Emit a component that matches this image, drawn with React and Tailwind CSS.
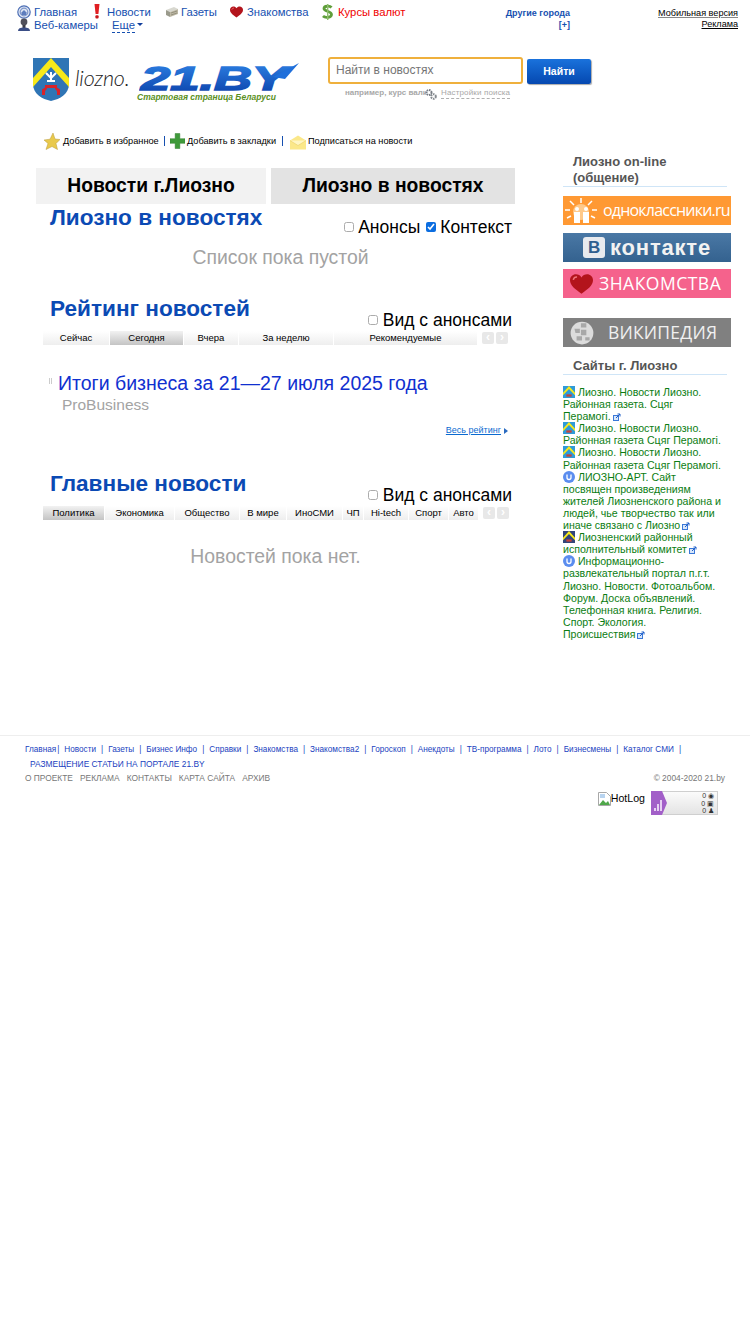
import React from "react";

const Shield = ({ className = "w-[36px] h-[43px]" }) => (
  <svg viewBox="0 0 36 43" className={className}>
    <path d="M0 0H36V26C36 36 27 41 18 43C9 41 0 36 0 26Z" fill="#2f75b5" />
    <path d="M0 20L18 0L36 20V29L18 9L0 29Z" fill="#f7e91a" />
    <path d="M18 14v10M13 15l5 5 5-5M14 23h8" stroke="#fff" strokeWidth="2" fill="none" />
    <path d="M9 37v-5c0-2 3-1 3-3v-2h12v2c0 2 3 1 3 3v5h-3v-3c0-2-2-2-2-4h-8c0 2-2 2-2 4v3z" fill="#d8232a" />
  </svg>
);

const IconHome = () => (
  <svg viewBox="0 0 14 14" className="w-[14px] h-[14px]">
    <circle cx="7" cy="7" r="6.2" fill="#dfe7f5" stroke="#4d6fb5" strokeWidth="1.2" />
    <circle cx="7" cy="7" r="3.8" fill="none" stroke="#7f96c8" strokeWidth="1.2" />
    <path d="M4.5 7.5L7 5l2.5 2.5V10h-5z" fill="#5d7dbd" />
  </svg>
);
const IconAlert = () => (
  <svg viewBox="0 0 10 15" className="w-[10px] h-[15px]">
    <path d="M2.5 0h5L6.4 10H3.6z" fill="#e01e22" />
    <rect x="3.4" y="11.2" width="3.2" height="3.4" rx="1" fill="#c8161a" />
  </svg>
);
const IconPapers = () => (
  <svg viewBox="0 0 14 12" className="w-[14px] h-[12px]">
    <path d="M1 4l8-3 4 2-8 3z" fill="#d8d8d0" />
    <path d="M1 4l4 2v5L1 9z" fill="#9a9a8c" />
    <path d="M5 6l8-3v5l-8 3z" fill="#bdb8a4" />
    <path d="M6 7l6-2M6 9l6-2" stroke="#837f6e" strokeWidth=".7" />
  </svg>
);
const IconHeart = ({ className = "w-[13px] h-[12px]" }) => (
  <svg viewBox="0 0 14 12" className={className}>
    <path d="M7 12C3 9 0 7 0 3.600C0 1.500 1.700 0 3.600 0C5 0 6.300.7 7 2C7.700.7 9 0 10.400 0C12.300 0 14 1.500 14 3.600C14 7 11 9 7 12Z" fill="#b3141c" />
    <path d="M2 3.500C2.300 2.300 3.300 1.700 4.300 1.800" stroke="#f0747a" strokeWidth=".9" fill="none" />
  </svg>
);
const IconDollar = () => (
  <svg viewBox="0 0 13 16" className="w-[13px] h-[16px]">
    <path d="M10.500 3.500C9 1.800 3 1.500 3 4.500C3 7.500 10.500 7 10.500 10.500C10.500 13.800 4 14 2 12" stroke="#5f9e3a" strokeWidth="2.800" fill="none" />
    <path d="M6.700 0v16" stroke="#8fbf6e" strokeWidth="1.400" />
  </svg>
);
const IconCam = () => (
  <svg viewBox="0 0 14 14" className="w-[14px] h-[14px]">
    <circle cx="7" cy="4" r="3.400" fill="#50505a" />
    <path d="M5.500 7h3v3h-3z" fill="#3c3c46" />
    <path d="M1 13c0-2.500 2-3.500 6-3.500s6 1 6 3.500z" fill="#3b4e86" />
  </svg>
);
const NavItem = ({ w, icon, text, c = "text-[#1650b0]", gap = "w-[17px]" }) => (
  <div className={`${w} flex items-center shrink-0`}>
    <span className={`${gap} flex shrink-0 items-center`}>{icon}</span>
    <span className={`${c} text-[11.3px] leading-[14px] whitespace-nowrap`}>{text}</span>
  </div>
);

const Check = ({ checked, className = "" }) => (
  <input type="checkbox" defaultChecked={checked} readOnly className={`w-[10px] h-[10px] m-0 accent-[#0b6de0] ${checked ? "" : "opacity-60"} ${className}`} />
);

const SectionHead = ({ title, children }) => (
  <div className="h-[35px] flex justify-between pr-[3px]">
    <h2 className="pl-[14px] text-[22.6px] leading-[26px] font-bold text-[#0b4ab4]">{title}</h2>
    <div className="self-end flex items-center text-[17.5px] leading-[20px] text-black mb-[1px]">{children}</div>
  </div>
);

const Arrows = () => (
  <div className="flex ml-[5px] gap-[2px] mt-[1px]">
    {["‹", "›"].map((a) => (
      <span key={a} className="w-[12px] h-[12px] rounded-[2px] bg-[#e8e8e8] text-white text-[12px] leading-[11px] font-bold text-center">{a}</span>
    ))}
  </div>
);

const TabBar = ({ items }) => (
  <div className="flex ml-[7px] h-[14px] items-start">
    <div className="flex gap-[1px]">
      {items.map(([t, w, active]) => (
        <div
          key={t}
          className={`${w} h-[14px] text-center text-[9.5px] leading-[14px] text-black whitespace-nowrap bg-gradient-to-b ${active ? "from-[#f2f2f2] to-[#c4c4c4]" : "from-[#ffffff] to-[#eeeeee]"}`}
        >
          {t}
        </div>
      ))}
    </div>
    <Arrows />
  </div>
);

const Ext = () => (
  <svg viewBox="0 0 8 8" className="inline-block w-[8px] h-[8px] ml-[2px] align-[-1px]">
    <rect x=".5" y="2.500" width="5" height="5" fill="#d8e6fa" stroke="#3a78d8" />
    <path d="M3 5l4-4M4.500 1H7v2.500" stroke="#1f5fc8" fill="none" />
  </svg>
);
const Last = ({ children }) => (
  <span className="whitespace-nowrap">{children}<Ext /></span>
);
const Dot = () => (
  <svg viewBox="0 0 12 12" className="inline-block w-[12px] h-[12px] mr-[3px] align-[-2px]">
    <circle cx="6" cy="6" r="6" fill="#5b8def" />
    <path d="M4 3.500v3a2 2 0 0 0 4 0v-3" stroke="#fff" strokeWidth="1.300" fill="none" />
  </svg>
);
const Mini = ({ dark }) => (
  <span className="inline-block w-[12px] h-[12px] mr-[3px] align-[-2px] overflow-hidden">
    <svg viewBox="0 0 36 43" className="w-[12px] h-[12px]" preserveAspectRatio="none">
      <path d="M0 0H36V43H0Z" fill={dark ? "#33457a" : "#2f9bd8"} />
      <path d="M0 24L18 0L36 24V33L18 11L0 33Z" fill="#f7e91a" />
      <path d="M10 38v-8h16v8z" fill="#c8423a" />
    </svg>
  </span>
);

const footerLinks = ["Главная", "Новости", "Газеты", "Бизнес Инфо", "Справки", "Знакомства", "Знакомства2", "Гороскоп", "Анекдоты", "ТВ-программа", "Лото", "Бизнесмены", "Каталог СМИ"];

export default function App() {
  return (
    <div className="w-[750px] min-h-[1333px] bg-white font-['Liberation_Sans',Arial,sans-serif] text-black overflow-hidden">
      {/* top */}
      <header className="h-[57px] flex relative">
        <div className="w-[470px] pl-[17px] pt-[4px] shrink-0">
          <div className="flex h-[15px]">
            <NavItem w="w-[75px]" icon={<IconHome />} text="Главная" />
            <NavItem w="w-[73px]" icon={<IconAlert />} text="Новости" gap="w-[15px]" />
            <NavItem w="w-[65px]" icon={<IconPapers />} text="Газеты" gap="w-[16px]" />
            <NavItem w="w-[91px]" icon={<IconHeart />} text="Знакомства" />
            <NavItem w="w-[90px]" icon={<IconDollar />} text="Курсы валют" c="text-[#f00000]" />
          </div>
          <div className="flex h-[14px] mt-[-1px]">
            <NavItem w="w-[95px]" icon={<IconCam />} text="Веб-камеры" />
            <span className="text-[11.3px] leading-[14px] text-[#1650b0] border-b border-dashed border-[#1650b0] h-[15px]">Еще</span>
            <span className="ml-[2px] mt-[5px] w-0 h-0 border-x-[3px] border-x-transparent border-t-[3px] border-t-[#123f9c]" />
          </div>
        </div>
        <div className="w-[100px] pt-[8px] text-right text-[9px] leading-[11px] font-bold text-[#1650b0]">
          <div>Другие города</div>
          <div className="mt-[1px]">[+]</div>
        </div>
        <div className="flex-1 pr-[12px] pt-[8px] text-right text-[9.1px] leading-[11px] text-black">
          <div><span className="underline decoration-[#888]">Мобильная версия</span></div>
          <div><span className="underline">Реклама</span></div>
        </div>
      </header>

      {/* logos + search */}
      <section className="h-[76px] flex">
        <div className="w-[328px] shrink-0 flex pl-[33px]">
          <div className="pt-[1px]"><Shield /></div>
          <div className="w-[71px] pl-[6px] pt-[8px] font-['Lato',sans-serif] italic font-light text-[21.5px] leading-[26px] text-[#222] tracking-[-0.2px] whitespace-nowrap">liozno.</div>
          <div className="w-[160px]">
            <svg viewBox="0 0 162 30" className="w-[162px] h-[30px] -ml-[1px] mt-[5px]">
              <defs>
                <linearGradient id="lg" x1="0" y1="0" x2="0" y2="1">
                  <stop offset="0" stopColor="#2f86e8" />
                  <stop offset="1" stopColor="#0a3fa8" />
                </linearGradient>
              </defs>
              <text x="2" y="28" fontFamily="Liberation Sans" fontWeight="700" fontStyle="italic" fontSize="34" textLength="146" lengthAdjust="spacingAndGlyphs" fill="url(#lg)" stroke="url(#lg)" strokeWidth="1.5">21.BY</text>
              <path d="M134 15L160 1L146 17Z" fill="#1f6fdb" />
            </svg>
            <div className="-ml-[3px] mt-[0px] text-[8.5px] leading-[11px] font-bold italic text-[#5a8f22] whitespace-nowrap">Стартовая страница Беларуси</div>
          </div>
        </div>
        <div className="flex-1">
          <div className="flex">
            <div className="w-[195px] h-[27px] border-2 border-[#efb03c] rounded-[3px] pl-[6px] text-[12px] leading-[22px] text-[#757575]">Найти в новостях</div>
            <button className="ml-[4px] mt-[2px] w-[64px] h-[25px] rounded-[2px] bg-gradient-to-b from-[#1a72dc] to-[#0648b0] text-white text-[10.5px] font-bold shadow-[1px_1px_1px_#aaa]">Найти</button>
          </div>
          <div className="flex items-center pl-[17px] mt-[2px] text-[8px] leading-[12px] font-bold text-[#a8a8a8] whitespace-nowrap">
            <span className="w-[80px]">например, курс валк</span>
            <svg viewBox="0 0 12 12" className="w-[12px] h-[12px] mt-[2px]">
              <circle cx="4" cy="4.500" r="2.500" fill="none" stroke="#777c84" strokeWidth="2" strokeDasharray="1.500 .8" />
              <circle cx="8.500" cy="8.500" r="2.300" fill="none" stroke="#858a90" strokeWidth="2" strokeDasharray="1.500 .8" />
            </svg>
            <span className="ml-[4px] border-b border-dashed border-[#b0b0b0] font-normal tracking-[0.15px] leading-[10px]">Настройки поиска</span>
          </div>
        </div>
      </section>

      {/* body */}
      <div className="h-[602px] flex">
        <main className="w-[479px] ml-[36px] shrink-0">
          <div className="h-[35px] flex items-start text-[9.2px] leading-[16px] text-black whitespace-nowrap pl-[8px]">
            <svg viewBox="0 0 16 17" className="w-[16px] h-[17px] shrink-0"><path d="M9 0l2 6 5 .5-4 4 1.500 6-5.500-3-6 3 2-6L0 7l6-.8z" fill="#e9c94c" stroke="#b99a38" strokeWidth=".5" /></svg>
            <span className="ml-[3px] w-[95px]">Добавить в избранное</span>
            <span className="ml-[6px] w-[1px] h-[10px] mt-[3px] bg-[#1650b0]" />
            <svg viewBox="0 0 16 16" className="ml-[5px] w-[15px] h-[16px] shrink-0"><path d="M5.500 0h5v5.500H16v5h-5.500V16h-5v-5.500H0v-5h5.500z" fill="#3f9a3a" stroke="#2c7a2a" strokeWidth=".5" /></svg>
            <span className="ml-[2px] w-[88px]">Добавить в закладки</span>
            <span className="ml-[7px] w-[1px] h-[10px] mt-[3px] bg-[#1650b0]" />
            <svg viewBox="0 0 16 14" className="ml-[7px] w-[16px] h-[15px] mt-[2px] shrink-0"><path d="M0 5l8-5 8 5v9H0z" fill="#fbe88a" /><path d="M0 5l8 5 8-5" fill="#fff6c4" stroke="#e9cf68" strokeWidth=".6" /></svg>
            <span className="ml-[2px]">Подписаться на новости</span>
          </div>

          <div className="flex h-[36px] text-[19.3px] font-bold leading-[36px] text-center text-black">
            <div className="w-[230px] bg-[#f2f2f2]">Новости г.Лиозно</div>
            <div className="ml-[5px] w-[244px] bg-[#e3e3e3]">Лиозно в новостях</div>
          </div>

          <div className="h-[33px] flex justify-between pr-[3px]">
            <h2 className="pl-[14px] text-[22.6px] leading-[28px] font-bold text-[#0b4ab4]">Лиозно в новостях</h2>
            <div className="self-end flex items-center text-[17.5px] leading-[20px]">
              <Check />
              <span className="ml-[4px]">Анонсы</span>
              <Check checked className="ml-[6px]" />
              <span className="ml-[4px]">Контекст</span>
            </div>
          </div>
          <div className="mt-[10px] h-[20px] text-center text-[19.4px] leading-[20px] text-[#a3a3a3] pl-[10px]">Список пока пустой</div>

          <div className="mt-[29px]">
            <SectionHead title="Рейтинг новостей">
              <Check /><span className="ml-[5px]">Вид с анонсами</span>
            </SectionHead>
          </div>
          <TabBar items={[["Сейчас", "w-[66px]"], ["Сегодня", "w-[73px]", true], ["Вчера", "w-[54px]"], ["За неделю", "w-[94px]"], ["Рекомендуемые", "w-[143px]"]]} />

          <div className="mt-[27px] flex">
            <span className="ml-[13px] w-[9px] shrink-0 mt-[6px] flex gap-[1px] h-[6px]">
              <i className="w-[1px] bg-[#ccc]" /><i className="w-[1px] bg-[#ccc]" />
            </span>
            <a className="text-[19.5px] leading-[22px] text-[#1030d0] whitespace-nowrap">Итоги бизнеса за 21—27 июля 2025 года</a>
          </div>
          <div className="mt-[2px] ml-[26px] text-[15.5px] leading-[18px] text-[#a3a3a3]">ProBusiness</div>
          <div className="mt-[10px] flex justify-end items-center pr-[7px] h-[12px]">
            <span className="text-[9px] leading-[12px] underline text-[#0a6ad0]">Весь рейтинг</span>
            <span className="ml-[3px] mt-[1px] w-0 h-0 border-y-[3px] border-y-transparent border-l-[4px] border-l-[#2a6ac0]" />
          </div>

          <div className="mt-[35px]">
            <SectionHead title="Главные новости">
              <Check /><span className="ml-[5px]">Вид с анонсами</span>
            </SectionHead>
          </div>
          <TabBar items={[["Политика", "w-[61px]", true], ["Экономика", "w-[69px]"], ["Общество", "w-[64px]"], ["В мире", "w-[46px]"], ["ИноСМИ", "w-[55px]"], ["ЧП", "w-[20px]"], ["Hi-tech", "w-[44px]"], ["Спорт", "w-[39px]"], ["Авто", "w-[29px]"]]} />
          <div className="mt-[26px] text-center text-[19.4px] leading-[20px] text-[#a3a3a3]">Новостей пока нет.</div>
        </main>

        <aside className="ml-[48px] w-[168px] shrink-0 pt-[21px]">
          <div className="border-b border-[#cfe5f7] w-[164px] pl-[10px] text-[13px] leading-[16px] font-bold text-[#555]">Лиозно on-line<br />(общение)</div>

          <div className="mt-[9px] h-[29px] bg-[#ff9933] flex items-center overflow-hidden pl-[1px]">
            <svg viewBox="0 0 34 28" className="w-[34px] h-[28px] shrink-0">
              <g stroke="#fff" strokeWidth="1.500"><path d="M17 1v5M6 4l4 4M28 4l-4 4M1 13h5M33 13h-5M3 21l4-2M31 21l-4-2" /></g>
              <circle cx="17" cy="15" r="8" fill="#ffc98a" />
              <circle cx="13" cy="12" r="2" fill="#fff" /><circle cx="22" cy="12" r="2" fill="#fff" />
              <path d="M10 26v-11h6v11zM19 26v-11h6v11z" fill="#fff" />
            </svg>
            <span className="ml-[5px] text-[16px] leading-[29px] text-white whitespace-nowrap font-['Open_Sans',sans-serif] tracking-[-0.8px]">одноклассники.ru</span>
          </div>

          <div className="mt-[8px] h-[29px] bg-gradient-to-b from-[#4a78a5] to-[#34628f] flex items-center justify-center">
            <span className="w-[22px] h-[21px] rounded-[3px] bg-[#e8eaee] text-[#2f5f8f] text-[17px] leading-[21px] font-bold text-center">В</span>
            <span className="ml-[5px] text-[22px] leading-[28px] font-bold text-[#f2f2f2] tracking-[0.8px]">контакте</span>
          </div>

          <div className="mt-[7px] h-[29px] bg-[#f5628c] flex items-center pl-[7px]">
            <IconHeart className="w-[23px] h-[20px]" />
            <span className="ml-[6px] text-[17.5px] leading-[29px] text-white font-['Open_Sans',sans-serif] tracking-[0.5px]">ЗНАКОМСТВА</span>
          </div>

          <div className="mt-[20px] h-[29px] bg-[#808080] flex items-center pl-[7px]">
            <svg viewBox="0 0 22 24" className="w-[24px] h-[26px] shrink-0">
              <circle cx="11" cy="12" r="10.500" fill="#dcdcdc" />
              <path d="M4 8h5v4H5zM10 3h5v4h-5zM10 9h5v5h-5zM6 15h5v4H6zM14 16h4v3h-4z" fill="#a8a8a8" />
            </svg>
            <span className="ml-[14px] text-[17.5px] leading-[29px] text-[#f0f0f0] font-['Open_Sans',sans-serif] tracking-[0.2px]">ВИКИПЕДИЯ</span>
          </div>

          <div className="mt-[11px] border-b border-[#cfe5f7] w-[164px] pl-[10px] text-[13px] leading-[16px] font-bold text-[#555]">Сайты г. Лиозно</div>

          <div className="mt-[11px] w-[159px] text-[10.6px] leading-[12.1px] text-[#0b7d12]">
            <div><Mini />Лиозно. Новости Лиозно. Районная газета. Сцяг <Last>Перамогі.</Last></div>
            <div><Mini />Лиозно. Новости Лиозно. Районная газета Сцяг Перамогі.</div>
            <div><Mini />Лиозно. Новости Лиозно. Районная газета Сцяг Перамогі.</div>
            <div><Dot />ЛИОЗНО-АРТ. Сайт посвящен произведениям жителей Лиозненского района и людей, чье творчество так или иначе связано с <Last>Лиозно</Last></div>
            <div><Mini dark />Лиозненский районный исполнительный <Last>комитет</Last></div>
            <div><Dot />Информационно-развлекательный портал п.г.т. Лиозно. Новости. Фотоальбом. Форум. Доска объявлений. Телефонная книга. Религия. Спорт. Экология. <Last>Происшествия</Last></div>
          </div>
        </aside>
      </div>

      {/* footer */}
      <footer className="border-t border-[#eeeeee] pt-[7px] px-[25px]">
        <div className="flex gap-[5px] text-[8.2px] leading-[14px] text-[#1a3fc0] whitespace-nowrap">
          {footerLinks.map((l, i) => (
            <React.Fragment key={l}>
              <span>{l}</span>
              <span className={i === 0 ? "-ml-[4px]" : ""}>|</span>
            </React.Fragment>
          ))}
        </div>
        <div className="pl-[5px] text-[8.4px] leading-[14px] text-[#1a3fc0] whitespace-nowrap">РАЗМЕЩЕНИЕ СТАТЬИ НА ПОРТАЛЕ 21.BY</div>
        <div className="flex justify-between text-[8.4px] leading-[14px] text-[#777]">
          <div className="flex gap-[7px]">
            <span>О ПРОЕКТЕ</span><span>РЕКЛАМА</span><span>КОНТАКТЫ</span><span>КАРТА САЙТА</span><span>АРХИВ</span>
          </div>
          <span>© 2004-2020 21.by</span>
        </div>
        <div className="flex justify-end items-start pr-[7px] mt-[6px]">
          <svg viewBox="0 0 13 14" className="w-[13px] h-[14px] mt-[1px] shrink-0">
            <path d="M.5.500h8l4 4v9h-12z" fill="#fff" stroke="#a8a8a8" />
            <path d="M1 13l4-5 3 3 2-2 2 4z" fill="#4fa84a" />
            <path d="M2 2h5v4H2z" fill="#b8d4f0" />
          </svg>
          <span className="text-[10.6px] leading-[14px] text-black">HotLog</span>
          <div className="ml-[6px] w-[67px] h-[24px] flex border border-[#cfcfcf] bg-gradient-to-b from-[#fbfbfb] to-[#e4e4e4]">
            <svg viewBox="0 0 16 24" className="w-[16px] h-[24px] -mt-[1px] -ml-[1px] shrink-0">
              <path d="M0 0H11L16 12L11 24H0Z" fill="#a25fc8" />
              <path d="M3 17h2v3H3zM6 13h2v7H6zM9 9h2v11H9z" fill="#e6d0f2" />
            </svg>
            <div className="flex-1 flex flex-col items-end pr-[3px] text-[7px] leading-[7.500px] text-[#333]">
              <span>0 ◉</span><span>0 ▣</span><span>0 ♟</span>
            </div>
          </div>
        </div>
      </footer>
    </div>
  );
}
